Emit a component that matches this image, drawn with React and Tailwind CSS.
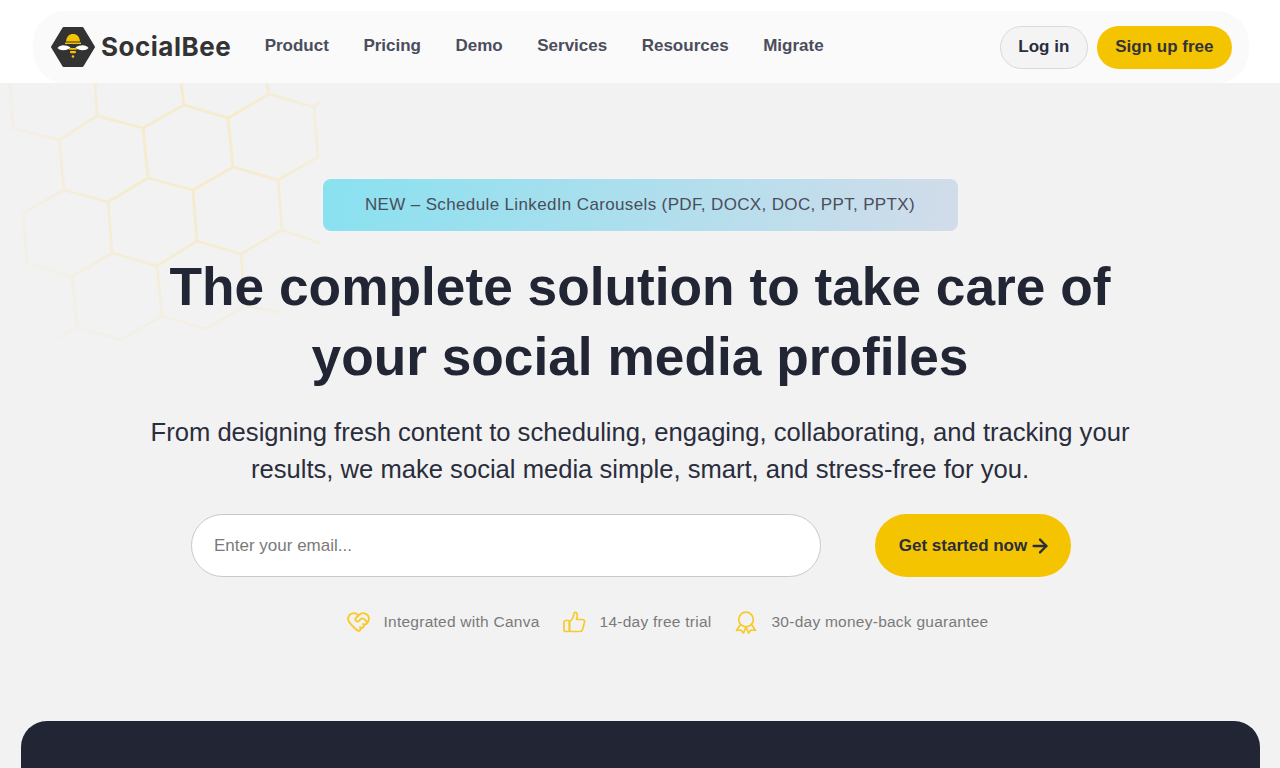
import React from "react";
import { ArrowRight, HeartHandshake } from "lucide-react";

const navItems = ["Product", "Pricing", "Demo", "Services", "Resources", "Migrate"];

const honeycomb = [
  "M95 83L97 116L143 128L184 105L181 83",
  "M184 105L228 118L269 94L267 83",
  "M269 94L314 107L320 102",
  "M314 107L318 157L278 180L233 167L228 118",
  "M143 128L148 178L193 190L233 167",
  "M97 116L59 140L64 190L108 202L148 178",
  "M59 140L13 128L10 85",
  "M64 190L23 213L27 263L72 277L112 253L108 202",
  "M193 190L197 241L157 266L112 253",
  "M278 180L282 230L241 254L197 241",
  "M282 230L320 243",
  "M157 266L162 316L121 340L77 327L72 277",
  "M77 327L37 350",
  "M162 316L206 329L245 306L241 254",
  "M245 306L280 312",
];

function Honeycomb() {
  return (
    <svg className="absolute left-0 top-0" width="320" height="360" viewBox="0 0 320 360" fill="none">
      <defs>
        <radialGradient id="fade" gradientUnits="userSpaceOnUse" cx="190" cy="160" r="240">
          <stop offset="0.3" stopColor="#fff" />
          <stop offset="0.65" stopColor="#fff" stopOpacity="0.45" />
          <stop offset="1" stopColor="#fff" stopOpacity="0.08" />
        </radialGradient>
        <mask id="fadeMask">
          <rect width="320" height="360" fill="url(#fade)" />
        </mask>
      </defs>
      <g mask="url(#fadeMask)">
        {honeycomb.map((d) => (
          <path key={d} d={d} stroke="#f5ebcd" strokeWidth="2.800" strokeLinejoin="round" />
        ))}
      </g>
    </svg>
  );
}

function Logo() {
  return (
    <div className="flex items-center gap-[5px]">
      <svg width="46" height="42" viewBox="0 0 46 42">
        <path d="M13.500 2H32.500L44 21L32.500 40H13.500L2 21Z" fill="#333333" stroke="#333333" strokeWidth="2" strokeLinejoin="round" />
        <path d="M16 15.500C16.500 10.500 19 8 23 8C27 8 29.500 10.500 30 15.500Z" fill="#f5c400" />
        <rect x="15" y="16.500" width="16" height="1.500" fill="#f5c400" />
        <path d="M7.500 22C10 18.500 16 18.500 20.500 21.500C18 24.500 10.500 25.500 7.500 22Z" fill="#ffffff" />
        <path d="M38.500 22C36 18.500 30 18.500 25.500 21.500C28 24.500 35.500 25.500 38.500 22Z" fill="#ffffff" />
        <rect x="19" y="22" width="8" height="1.800" rx="0.900" fill="#f5c400" />
        <rect x="20" y="25" width="6" height="2.200" rx="1" fill="#f5c400" />
        <circle cx="23" cy="30.500" r="1.300" fill="#f5c400" />
      </svg>
      <span className="font-['Inter',sans-serif] text-[26px] font-bold leading-none tracking-[0.5px] text-[#333333]">SocialBee</span>
    </div>
  );
}

function ThumbIcon() {
  return (
    <svg width="24" height="24" viewBox="0 0 24 24" fill="none" stroke="#f7ca2a" strokeWidth="1.700" strokeLinejoin="round">
      <rect x="2" y="10.500" width="5.500" height="11" rx="1.500" />
      <path d="M7.500 11.500C9.500 10.500 11.500 7 12 3.500C12.200 2 14.500 2 15 3.500C15.800 6 15 8 14.500 9.500H20.500C22 9.500 23 11 22.500 12.500L20.500 19.500C20.200 20.800 19 21.500 18 21.500H9C8 21.500 7.500 21 7.500 20Z" />
    </svg>
  );
}

function AwardIcon() {
  return (
    <svg width="24" height="24" viewBox="0 0 24 24" fill="none" stroke="#f7ca2a" strokeWidth="1.700" strokeLinejoin="round">
      <circle cx="12" cy="9.500" r="7.300" />
      <path d="M6.500 14.500L2.500 20.500L7 20L9.500 23L12 17L14.500 23L17 20L21.500 20.500L17.500 14.500" />
    </svg>
  );
}

function Perk({ icon, text }) {
  return (
    <div className="flex items-center gap-[14px]">
      {icon}
      <span className="text-[15.500px] tracking-[0.25px] text-[#7a7a7a]">{text}</span>
    </div>
  );
}

export default function App() {
  return (
    <div className="relative h-screen overflow-hidden bg-[#f2f2f2] font-['Liberation_Sans',Arial,sans-serif]">
      <header className="relative z-10 bg-white pl-[33px] pr-[31px] pt-[11px]">
        <div className="flex h-[72px] items-center rounded-[32px] bg-[#fafafa] px-[17px]">
          <Logo />
          <nav className="ml-[33.500px] flex gap-[34.500px] pb-[3px]">
            {navItems.map((item) => (
              <a key={item} className="text-[17px] font-bold text-[#4a4d5c]">{item}</a>
            ))}
          </nav>
          <div className="ml-auto flex items-center gap-[9px]">
            <button className="h-[43px] rounded-full border border-[#d9d9d9] bg-[#f4f4f4] px-[17.500px] text-[17px] font-bold text-[#2a2d3c]">Log in</button>
            <button className="h-[43px] rounded-full bg-[#f5c400] px-[18.500px] text-[17px] font-bold text-[#33333a]">Sign up free</button>
          </div>
        </div>
      </header>

      <Honeycomb />

      <main className="relative flex flex-col items-center pt-[96px]">
        <div className="flex h-[52px] w-[635px] items-center justify-center rounded-lg bg-[linear-gradient(100deg,#89e1f0,#d2dcea)] pb-[1px] text-[17px] tracking-[0.36px] text-[#4a4d5c] shadow-[0_0_3px_rgba(255,255,255,0.4)]">
          NEW – Schedule LinkedIn Carousels (PDF, DOCX, DOC, PPT, PPTX)
        </div>
        <h1 className="mt-[21px] w-[1000px] text-center text-[53.250px] font-bold leading-[70px] text-[#212534]">
          The complete solution to take care of your social media profiles
        </h1>
        <p className="mt-[22px] w-[1000px] text-center text-[25.600px] leading-[37px] text-[#2a2d3c]">
          From designing fresh content to scheduling, engaging, collaborating, and tracking your results, we make social media simple, smart, and stress-free for you.
        </p>
        <form className="mr-[18px] mt-[26px] flex w-[880px] justify-between">
          <input
            type="email"
            placeholder="Enter your email..."
            className="h-[63px] w-[630px] rounded-[32px] border border-[#c9c9c9] bg-white px-[22px] text-[17px] outline-none placeholder:text-[#7a7a7a]"
          />
          <button type="button" className="flex h-[63px] w-[196px] items-center justify-center gap-[6px] rounded-[32px] bg-[#f5c400] text-[17px] font-bold text-[#2a2d3c]">
            Get started now
            <ArrowRight size={22} strokeWidth={2.500} className="-mx-[4px]" />
          </button>
        </form>
        <div className="ml-[55px] mt-[32px] flex items-center gap-[22px]">
          <Perk icon={<HeartHandshake size={25} strokeWidth={1.800} className="-mx-[1px] text-[#f7ca2a]" />} text="Integrated with Canva" />
          <Perk icon={<ThumbIcon />} text="14-day free trial" />
          <Perk icon={<AwardIcon />} text="30-day money-back guarantee" />
        </div>
        <section className="mt-[87px] h-[200px] w-[1239px] rounded-[26px] bg-[#212534]" />
      </main>
    </div>
  );
}
